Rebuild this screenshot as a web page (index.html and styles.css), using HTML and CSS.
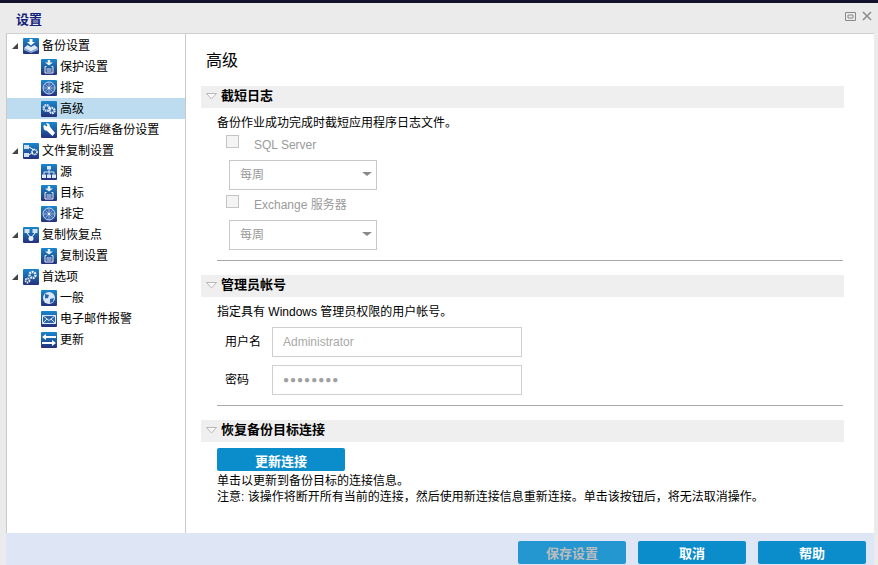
FILE: index.html
```html
<!DOCTYPE html>
<html lang="zh-CN">
<head>
<meta charset="utf-8">
<title>设置</title>
<link rel="stylesheet" href="styles.css">
</head>
<body>
<svg class="defs" aria-hidden="true">
  <defs>
    <linearGradient id="bg" x1="0" y1="0" x2="0" y2="1"><stop offset="0" stop-color="#1a86cc"/><stop offset=".5" stop-color="#1d5ea4"/><stop offset="1" stop-color="#262f7c"/></linearGradient>
    <symbol id="i-backup" viewBox="0 0 16 16"><rect width="16" height="16" rx="1" fill="url(#bg)"/><path d="M6.500 1h3v3H12L8 7.500 4 4h2.500z" fill="#fff"/><path d="M1 10l3.500-3L8 9l3.500-2L15 10l-7 3.500z" fill="#dfe9f5"/><path d="M1 10l7 3.500L15 10v2l-7 3-7-3z" fill="#8fb0d8"/></symbol>
    <symbol id="i-protect" viewBox="0 0 16 16"><rect width="16" height="16" rx="1" fill="url(#bg)"/><path d="M6.800 1h2.400v2.500H12L8 6.500 4 3.500h2.800z" fill="#e8f1fa"/><path d="M4 7.500h1.500M10.500 7.500H12M4 7.500v6.500h8V7.500M5.500 10h5M5.500 12h5" fill="none" stroke="#e8f1fa"/></symbol>
    <symbol id="i-clock" viewBox="0 0 16 16"><rect width="16" height="16" rx="1" fill="url(#bg)"/><circle cx="8" cy="8" r="6" fill="#3f6fb2" stroke="#c9d8ec"/><path d="M8 3v10M3 8h10M4.500 4.500l7 7M11.500 4.500l-7 7" stroke="#a9c0df" stroke-width=".7"/><circle cx="8" cy="8" r="1.200" fill="#e8f1fa"/></symbol>
    <symbol id="i-gears" viewBox="0 0 16 16"><rect width="16" height="16" rx="1" fill="url(#bg)"/><circle cx="5.500" cy="7" r="2.800" fill="none" stroke="#d8e2ef" stroke-width="2.400" stroke-dasharray="1.600 .6"/><circle cx="11" cy="9.500" r="2.500" fill="none" stroke="#eef2f8" stroke-width="2.400" stroke-dasharray="1.600 .6"/></symbol>
    <symbol id="i-wrench" viewBox="0 0 16 16"><rect width="16" height="16" rx="1" fill="url(#bg)"/><path d="M3 2.500l2.500 2 1-1L5 1.500c2-.8 4 .5 3.800 3L14 11l-2.500 3-6-5.500C3 9 1.800 6 3 2.500z" fill="#fff"/></symbol>
    <symbol id="i-copy" viewBox="0 0 16 16"><rect width="16" height="16" rx="1" fill="url(#bg)"/><path d="M1 2h5v4H1zM1 10h5v4H1z" fill="#cfe0f2"/><path d="M6 4l5 3M6 12l4-3" stroke="#fff"/><circle cx="11.500" cy="9" r="2.500" fill="none" stroke="#fff" stroke-width="1.600" stroke-dasharray="1.200 .6"/></symbol>
    <symbol id="i-source" viewBox="0 0 16 16"><rect width="16" height="16" rx="1" fill="url(#bg)"/><path d="M6 2h4v3.500H6zM1 10.500h4V14H1zM6 10.500h4V14H6zM11 10.500h4V14h-4z" fill="#dfe9f5"/><path d="M8 5.500v5M3 10.500V8h10v2.500" fill="none" stroke="#dfe9f5"/></symbol>
    <symbol id="i-rep" viewBox="0 0 16 16"><rect width="16" height="16" rx="1" fill="url(#bg)"/><path d="M1.500 2h5v4h-5zM9.500 2h5v4h-5z" fill="#cfe0f2"/><path d="M4 6l4 5 4-5" fill="none" stroke="#fff"/><circle cx="8" cy="11.500" r="2.500" fill="#e6eef8"/></symbol>
    <symbol id="i-prefs" viewBox="0 0 16 16"><rect width="16" height="16" rx="1" fill="url(#bg)"/><circle cx="9.500" cy="6" r="3" fill="none" stroke="#eef2f8" stroke-width="2.400" stroke-dasharray="1.800 .8"/><circle cx="4.500" cy="11.500" r="2" fill="none" stroke="#eef2f8" stroke-width="1.800" stroke-dasharray="1.400 .7"/></symbol>
    <symbol id="i-globe" viewBox="0 0 16 16"><rect width="16" height="16" rx="1" fill="url(#bg)"/><circle cx="8" cy="8" r="6" fill="#d9e6f4"/><path d="M4 4l4 1-1 3-3 .5zM9 9l4-1-1 4-3 1z" fill="#2a64ad"/></symbol>
    <symbol id="i-mail" viewBox="0 0 16 16"><rect width="16" height="16" rx="1" fill="url(#bg)"/><path d="M1.500 4.500h13v8h-13z" fill="#2c63a9" stroke="#dfe9f5"/><path d="M1.500 4.500L8 9.500l6.500-5M1.500 12.500L6 8M14.500 12.500L10 8" fill="none" stroke="#dfe9f5"/></symbol>
    <symbol id="i-update" viewBox="0 0 16 16"><rect width="16" height="16" rx="1" fill="url(#bg)"/><path d="M1 5l4-3v2h10v2H5v2zM15 11l-4-3v2H1v2h10v2z" fill="#fff"/></symbol>
    <symbol id="i-chev" viewBox="0 0 11 7"><path d="M.5.500h10L5.500 6z" fill="#f9f9f9" stroke="#b9b9b9"/></symbol>
  </defs>
</svg>
<div class="topbar"></div>
<div class="window">
  <header class="titlebar">
    <h1 class="wintitle">设置</h1>
    <div class="winctl">
      <svg class="ctl" viewBox="0 0 11 9"><path d="M.5.500h10v8H.5zM3 3h5v3H3z" fill="none" stroke="#8a8a8a"/></svg>
      <svg class="ctl" viewBox="0 0 10 10"><path d="M1 1l8 8M9 1L1 9" stroke="#8a8a8a" stroke-width="1.500"/></svg>
    </div>
  </header>
  <div class="panel">
    <div class="main">
      <nav class="tree">
        <div class="node top"><span class="tri"></span><svg class="ico"><use href="#i-backup"/></svg><span class="nlabel">备份设置</span></div>
        <div class="node"><svg class="ico"><use href="#i-protect"/></svg><span class="nlabel">保护设置</span></div>
        <div class="node"><svg class="ico"><use href="#i-clock"/></svg><span class="nlabel">排定</span></div>
        <div class="node sel"><svg class="ico"><use href="#i-gears"/></svg><span class="nlabel">高级</span></div>
        <div class="node"><svg class="ico"><use href="#i-wrench"/></svg><span class="nlabel">先行/后继备份设置</span></div>
        <div class="node top"><span class="tri"></span><svg class="ico"><use href="#i-copy"/></svg><span class="nlabel">文件复制设置</span></div>
        <div class="node"><svg class="ico"><use href="#i-source"/></svg><span class="nlabel">源</span></div>
        <div class="node"><svg class="ico"><use href="#i-protect"/></svg><span class="nlabel">目标</span></div>
        <div class="node"><svg class="ico"><use href="#i-clock"/></svg><span class="nlabel">排定</span></div>
        <div class="node top"><span class="tri"></span><svg class="ico"><use href="#i-rep"/></svg><span class="nlabel">复制恢复点</span></div>
        <div class="node"><svg class="ico"><use href="#i-protect"/></svg><span class="nlabel">复制设置</span></div>
        <div class="node top"><span class="tri"></span><svg class="ico"><use href="#i-prefs"/></svg><span class="nlabel">首选项</span></div>
        <div class="node"><svg class="ico"><use href="#i-globe"/></svg><span class="nlabel">一般</span></div>
        <div class="node"><svg class="ico"><use href="#i-mail"/></svg><span class="nlabel">电子邮件报警</span></div>
        <div class="node"><svg class="ico"><use href="#i-update"/></svg><span class="nlabel">更新</span></div>
      </nav>
      <main class="content">
        <h2 class="pagetitle">高级</h2>
        <section class="sec first">
          <h3 class="sechead"><svg class="chev"><use href="#i-chev"/></svg>截短日志</h3>
          <div class="body">
            <p class="desc">备份作业成功完成时截短应用程序日志文件。</p>
            <div class="opt"><span class="check"></span><span class="optlabel">SQL Server</span></div>
            <div class="select"><span>每周</span><i class="arrow"></i></div>
            <div class="opt opt2"><span class="check"></span><span class="optlabel">Exchange 服务器</span></div>
            <div class="select"><span>每周</span><i class="arrow"></i></div>
          </div>
          <hr class="rule rule1">
        </section>
        <section class="sec">
          <h3 class="sechead"><svg class="chev"><use href="#i-chev"/></svg>管理员帐号</h3>
          <div class="body">
            <p class="desc">指定具有 Windows 管理员权限的用户帐号。</p>
            <div class="field"><label class="flabel">用户名</label><div class="input">Administrator</div></div>
            <div class="field f2"><label class="flabel">密码</label><div class="input dots">●●●●●●●●</div></div>
          </div>
          <hr class="rule rule2">
        </section>
        <section class="sec">
          <h3 class="sechead"><svg class="chev"><use href="#i-chev"/></svg>恢复备份目标连接</h3>
          <div class="body">
            <button class="btn wide">更新连接</button>
            <p class="note">单击以更新到备份目标的连接信息。</p>
            <p class="note">注意: 该操作将断开所有当前的连接，然后使用新连接信息重新连接。单击该按钮后，将无法取消操作。</p>
          </div>
        </section>
      </main>
    </div>
    <footer class="footer">
      <button class="btn act off">保存设置</button>
      <button class="btn act">取消</button>
      <button class="btn act">帮助</button>
    </footer>
  </div>
</div>
</body>
</html>
```
FILE: styles.css
```css
* { box-sizing: border-box; }
html, body { margin: 0; padding: 0; height: 100%; overflow: hidden; }
body {
  width: 878px; height: 565px; background: #ebebeb; color: #000;
  font-family: "Liberation Sans", "Noto Sans CJK SC", sans-serif; font-size: 12px;
  display: flex; flex-direction: column;
}
.defs { width: 0; height: 0; display: block; flex: none; }
.topbar { height: 3px; background: #14122b; flex: none; }
.window { flex: 1; display: flex; flex-direction: column; padding: 0 4px 0 6px; min-height: 0; }
.titlebar { height: 31px; flex: none; display: flex; align-items: center; justify-content: space-between; padding: 4px 2px 0 10px; border-bottom: 1px solid #cfcfcf; }
.wintitle { margin: 0; font-size: 13px; font-weight: 700; color: #14237a; line-height: 16px; }
.winctl { display: flex; align-items: center; gap: 6px; margin-top: -8px; }
.ctl { display: block; }
.ctl:first-child { width: 11px; height: 9px; }
.ctl:last-child { width: 10px; height: 10px; }
.panel { flex: 1; display: flex; flex-direction: column; background: #fff; min-height: 0; }
.main { flex: 1; display: flex; min-height: 0; }
.tree { width: 180px; flex: none; padding: 1px 0 0 0; border-left: 1px solid #c9c9c9; border-right: 1px solid #c9c9c9; }
.node { height: 21px; display: flex; align-items: center; padding-left: 34px; gap: 3px; font-size: 12px; white-space: nowrap; }
.node.top { padding-left: 5px; }
.node.sel { background: #bedcef; }
.nlabel { padding-bottom: 2px; }
.tri { width: 0; height: 0; border-style: solid; border-width: 0 0 6px 6px; border-color: transparent transparent #444 transparent; margin-right: 2px; }
.ico { width: 16px; height: 16px; flex: none; display: block; }
.content { flex: 1; min-width: 0; padding: 0 30px 0 15px; }
.pagetitle { margin: 17px 0 15px 5px; font-size: 16px; font-weight: 400; line-height: 20px; }
.sec { display: block; }
.sechead { margin: 0; height: 22px; background: #efefef; font-size: 13px; font-weight: 700; line-height: 20px; display: flex; align-items: center; padding: 0 0 2px 5px; }
.chev { width: 11px; height: 7px; margin-right: 4px; flex: none; display: block; }
.body { padding-left: 16px; }
.desc { margin: 0; height: 30px; line-height: 31px; }
.opt { display: flex; height: 14px; margin-left: 9px; margin-top: -3px; }
.opt2 { margin-top: 5px; }
.opt2 .optlabel { line-height: 20px; }
.check { width: 13px; height: 13px; border: 1px solid #c4c4c4; background: #f4f4f4; flex: none; }
.optlabel { color: #9a9a9a; margin-left: 15px; line-height: 20px; white-space: nowrap; }
.select { width: 148px; height: 30px; margin: 11px 0 0 12px; border: 1px solid #c8c8c8; color: #999; display: flex; align-items: center; justify-content: space-between; padding: 0 4px 3px 10px; }
.arrow { width: 0; height: 0; border-style: solid; border-width: 4px 5px 0 5px; border-color: #8a8a8a transparent transparent transparent; margin-top: 1px; }
.rule { margin: 0 1px 0 16px; border: 0; height: 1px; background: #a9a9a9; }
.rule1 { margin-top: 10px; margin-bottom: 14px; }
.rule2 { margin-top: 10px; margin-bottom: 14px; }
.field { display: flex; align-items: center; height: 30px; }
.f2 { margin-top: 8px; }
.flabel { width: 55px; padding: 0 0 3px 8px; flex: none; }
.input { width: 250px; height: 30px; border: 1px solid #cfcfcf; color: #a8a8a8; padding-left: 10px; line-height: 28px; }
.dots { font-size: 10px; letter-spacing: 1px; color: #a0a0a0; }
.btn { font-family: inherit; border: 0; padding: 0 0 1px; background: #0b8ccb; color: #fff; font-weight: 700; font-size: 13px; border-radius: 2px; }
.wide { display: block; width: 128px; height: 23px; margin: 6px 0 2px; padding: 2px 0 0; }
.note { margin: 0; line-height: 16px; }
.footer { height: 32px; flex: none; background: #dee6f5; display: flex; justify-content: flex-end; gap: 12px; padding: 8px 8px 1px 0; }
.act { width: 108px; height: 23px; }
.off { background: #2497d0; color: #bcbcbc; }
```
